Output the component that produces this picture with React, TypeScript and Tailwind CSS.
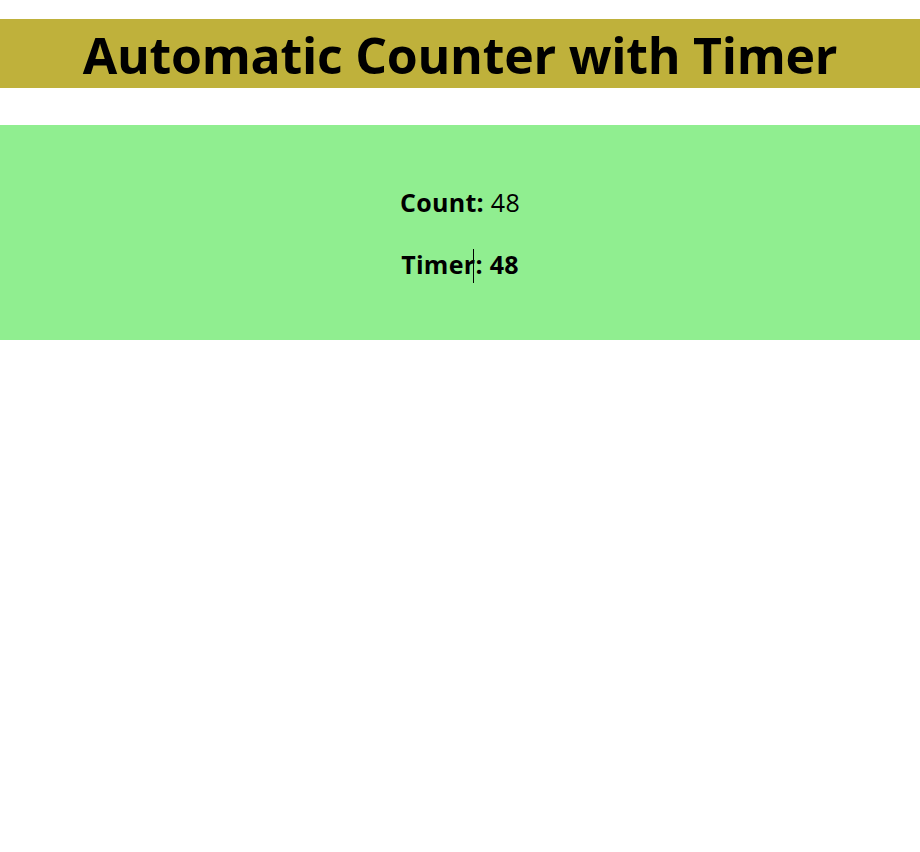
export default function App() {
  const count = 48;
  const timer = 48;

  return (
    <div className="min-h-[852px] bg-white pt-[19px] font-['Open_Sans',sans-serif] text-black">
      <header className="flex h-[69px] items-center justify-center bg-[#bfb13b] pt-[3px]">
        <h1 className="text-[50px] font-bold leading-none tracking-[-0.25px]">Automatic Counter with Timer</h1>
      </header>

      <section className="mt-[37px] flex h-[215px] flex-col items-center justify-center gap-[37px] bg-[#90ee90] pt-[2px] text-[25px] leading-none tracking-[0.3px]">
        <p>
          <span className="font-bold">Count:</span> {count}
        </p>
        <p className="relative font-bold">
          Timer: {timer}
          <span className="absolute left-[72px] top-[-3px] h-[34px] w-px bg-black" />
        </p>
      </section>
    </div>
  );
}
